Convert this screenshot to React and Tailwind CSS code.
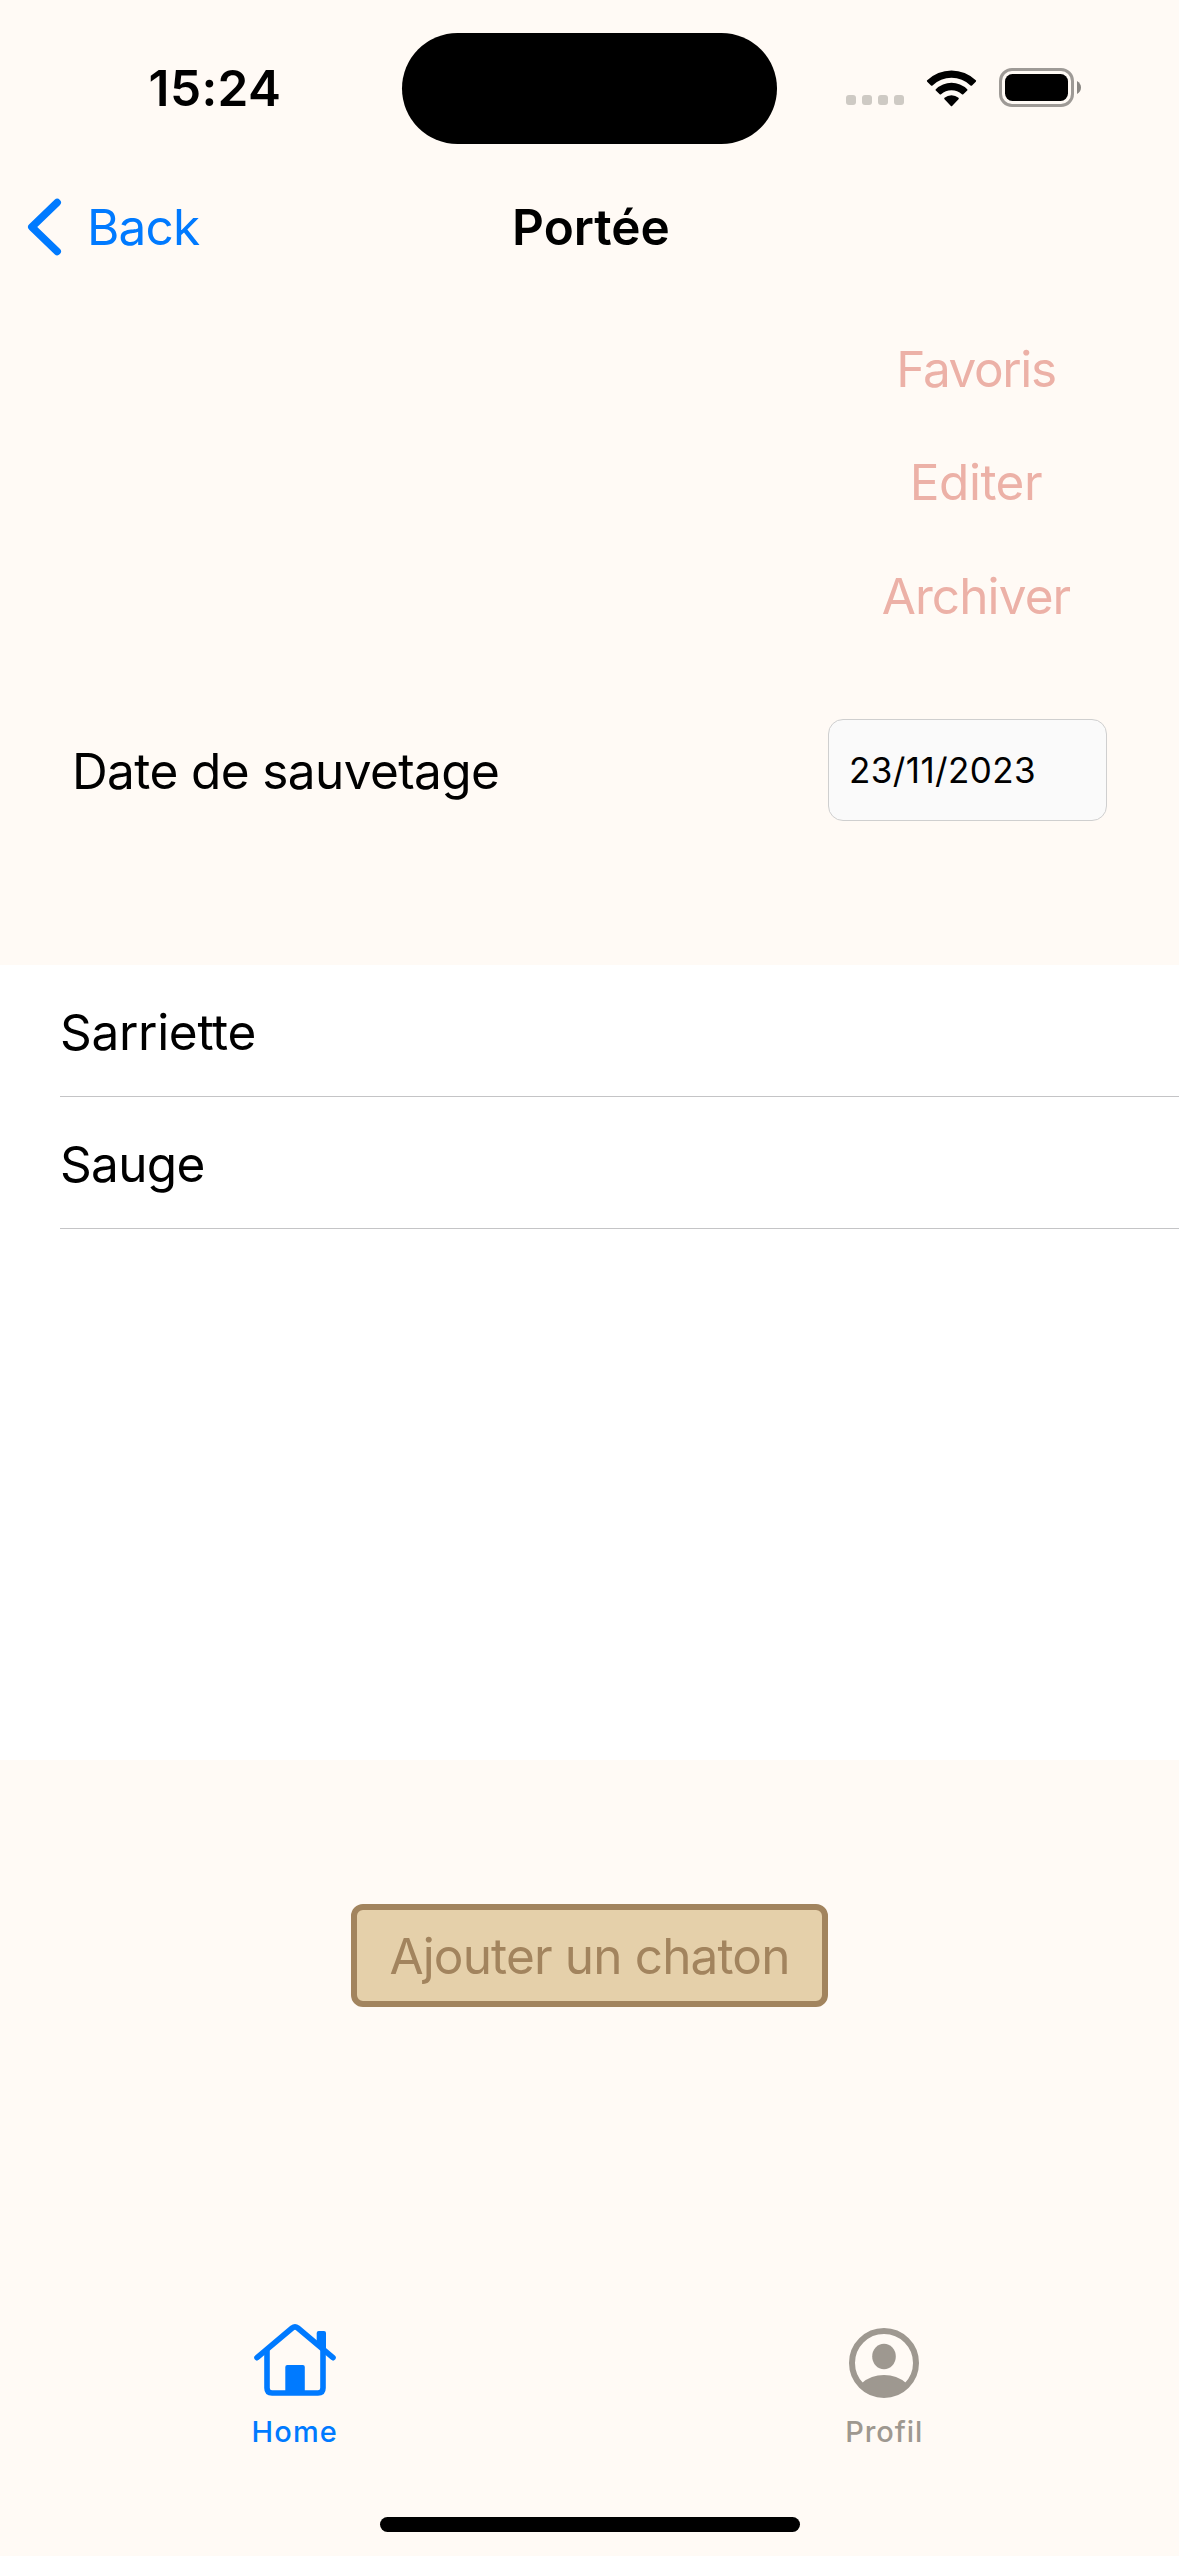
const kittens = [
  { name: "Sarriette", tracking: "tracking-[-0.3px]" },
  { name: "Sauge", tracking: "tracking-[-0.7px]" },
];

function StatusBar() {
  return (
    <div className="flex h-[176px] shrink-0 items-center">
      <div className="flex w-[402px] justify-center pl-[28px] text-[49.5px] font-semibold tracking-[0.4px]">15:24</div>
      <div className="mt-[1px] h-[111px] w-[375px] rounded-full bg-black" />
      <div className="mb-[1px] flex h-[40px] flex-1 items-center pl-[69px]">
        <div className="mt-[25px] flex gap-[6px]">
          {[0, 1, 2, 3].map((i) => (
            <span key={i} className="size-[10px] rounded-[3px] bg-[#cecac4]" />
          ))}
        </div>
        <svg className="ml-[22px] h-[38px] w-[51px]" viewBox="0 0 51 38">
          <path d="M1.2 11.3A34.8 34.8 0 0 1 49.8 11.3Q50.5 12 49.8 12.7L46 16.4Q45.2 17 44.5 16.4A27.6 27.6 0 0 0 6.5 16.4Q5.8 17 5 16.4L1.2 12.7Q.5 12 1.2 11.3Z" />
          <path d="M9.8 20.2A22.5 22.5 0 0 1 41.2 20.2Q41.9 20.9 41.2 21.6L37.3 25.3Q36.6 25.9 35.9 25.3A15.4 15.4 0 0 0 15.1 25.3Q14.4 25.9 13.7 25.3L9.8 21.6Q9.1 20.9 9.8 20.2Z" />
          <path d="M18.5 28.8A10.8 10.8 0 0 1 32.5 28.8Q33.2 29.5 32.5 30.2L26.1 37Q25.5 37.6 24.9 37L18.5 30.2Q17.8 29.5 18.5 28.8Z" />
        </svg>
        <svg className="ml-[22px] h-[39px] w-[83px]" viewBox="0 0 83 39">
          <rect x="1.5" y="1.5" width="72" height="36" rx="11.5" fill="none" stroke="#9e9a96" strokeWidth="3" />
          <rect x="6" y="6" width="63" height="27" rx="7.5" />
          <path d="M78 13Q82 15.5 82 19.5T78 26Z" fill="#8a8783" />
        </svg>
      </div>
    </div>
  );
}

function NavBar() {
  return (
    <div className="grid h-[102px] shrink-0 grid-cols-3 items-center text-[49.5px]">
      <div className="flex items-center pl-[27px] text-[#007aff]">
        <svg className="h-[58px] w-[35px]" viewBox="0 0 35 58" fill="none" stroke="currentColor" strokeWidth="7.5" strokeLinecap="round" strokeLinejoin="round">
          <path d="M30.2 4.5 4.8 29 30.2 53.5" />
        </svg>
        <span className="ml-[25px] tracking-[-0.8px]">Back</span>
      </div>
      <div className="pl-[3px] text-center font-semibold">Portée</div>
    </div>
  );
}

function Actions() {
  return (
    <div className="mr-[110px] mt-[34px] flex w-[186px] shrink-0 flex-col items-center self-end text-[49.5px] text-[#ecb1a7]">
      <button className="h-[113px] tracking-[-1.4px]">Favoris</button>
      <button className="h-[114px] tracking-[-0.5px]">Editer</button>
      <button className="h-[114px] tracking-[-0.9px]">Archiver</button>
    </div>
  );
}

function RescueDate() {
  return (
    <div className="mt-[66px] flex h-[102px] shrink-0 items-center justify-between px-[72px]">
      <span className="mt-[2px] text-[49.5px] tracking-[-0.6px]">Date de sauvetage</span>
      <div className="flex h-[102px] w-[279px] items-center rounded-[15px] border border-[#cfcfcf] bg-[#fafafa] pl-[20px] text-[35px] tracking-[0.4px]">
        23/11/2023
      </div>
    </div>
  );
}

function KittenList() {
  return (
    <div className="mt-[144px] h-[795px] shrink-0 bg-white pl-[60px] text-[49.5px]">
      {kittens.map(({ name, tracking }) => (
        <div key={name} className="flex h-[132px] items-center border-b border-[#c4c4c6] pt-[2px]">
          <span className={tracking}>{name}</span>
        </div>
      ))}
    </div>
  );
}

function HomeIcon() {
  return (
    <svg className="h-[73px] w-[82px]" viewBox="0 0 82 73" fill="none" stroke="currentColor" strokeWidth="5.6" strokeLinecap="round" strokeLinejoin="round">
      <path d="M3 33.7 38.2 4Q41 1.8 43.8 4L79 33.7" />
      <path d="M13 27V64Q13 69 18 69H64Q69 69 69 64V27" />
      <path d="M64.7 9H70V25L64.7 20.5Z" fill="currentColor" strokeWidth="4" />
      <path d="M31.3 69V43Q31.3 41 33.3 41H48.8Q50.8 41 50.8 43V69Z" fill="currentColor" stroke="none" />
    </svg>
  );
}

function ProfileIcon() {
  return (
    <svg className="h-[70px] w-[70px]" viewBox="0 0 70 70">
      <circle cx="35" cy="35" r="32" fill="none" stroke="currentColor" strokeWidth="6" />
      <ellipse cx="35" cy="28.5" rx="11.8" ry="12.7" fill="currentColor" />
      <path d="M13 55Q22 47 35 47T57 55L54 61Q46 69 35 69T16 61Z" fill="currentColor" />
    </svg>
  );
}

function TabBar() {
  return (
    <div className="mt-[317px] grid h-[130px] shrink-0 grid-cols-2 text-[29px] font-medium">
      <div className="flex flex-col items-center text-[#007aff]">
        <div className="flex h-[74px] items-start"><HomeIcon /></div>
        <span className="mt-[14px] leading-[40px] tracking-[1.1px]">Home</span>
      </div>
      <div className="flex flex-col items-center text-[#9e9890]">
        <div className="flex h-[74px] items-end"><ProfileIcon /></div>
        <span className="mt-[14px] leading-[40px] tracking-[0.9px]">Profil</span>
      </div>
    </div>
  );
}

export default function App() {
  return (
    <div className="flex h-[2556px] w-[1179px] flex-col overflow-hidden bg-[#fffaf5] font-['Inter',sans-serif] leading-[60px] text-black">
      <StatusBar />
      <NavBar />
      <Actions />
      <RescueDate />
      <KittenList />
      <button className="mt-[144px] h-[103px] w-[477px] shrink-0 self-center rounded-[12px] border-[6px] border-[#a2845e] bg-[#e5d0aa] text-[49.5px] tracking-[-0.85px] text-[#a2845e]">
        Ajouter un chaton
      </button>
      <TabBar />
      <div className="mt-[63px] h-[15px] w-[420px] shrink-0 self-center rounded-full bg-black" />
    </div>
  );
}
